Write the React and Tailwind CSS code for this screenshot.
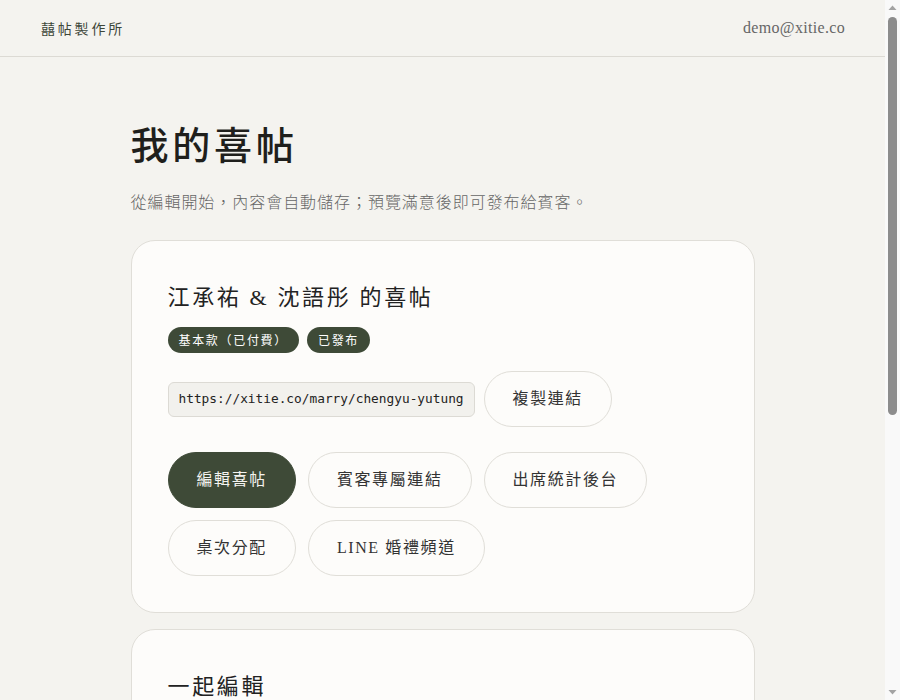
export default function App() {
  const serif = { fontFamily: '"Liberation Serif", "Noto Sans CJK TC", serif' };
  const btn = "h-14 px-7 rounded-full border border-[#e0ded8] bg-[#fdfcfa] text-[16px] tracking-[0.1em] text-[#333]";
  const btnDark = "h-14 px-7 rounded-full border border-[#3e4a37] bg-[#3e4a37] text-[16px] tracking-[0.1em] text-[#f4f3ef]";
  return (
    <div className="h-[700px] flex overflow-hidden bg-[#f4f3ef] text-[#222]" style={serif}>
      <div className="flex-1 min-w-0 overflow-hidden">
        <header className="h-[57px] border-b border-[#dcdad4] flex items-center justify-between pl-[41px] pr-[40px]">
          <div className="text-[14px] tracking-[0.2em] text-[#3d4639]" style={{ fontFamily: '"Noto Sans CJK TC", sans-serif' }}>囍帖製作所</div>
          <div className="text-[16px] tracking-[0.02em] text-[#666]">demo@xitie.co</div>
        </header>
        <main className="max-w-2xl mx-auto px-6 pt-[67px] pb-16">
          <h1 className="text-[38px] leading-[44px] font-medium tracking-[0.1em] text-[#1f1f1c]">我的喜帖</h1>
          <p className="mt-[23px] text-[16px] leading-[24px] tracking-[0.06em] text-[#666] font-light">從編輯開始，內容會自動儲存；預覽滿意後即可發布給賓客。</p>

          <section className="mt-[25px] bg-[#fdfcfa] border border-[#e0ded8] rounded-[24px] pt-10 px-9 pb-9">
            <h2 className="text-[22px] leading-[33px] tracking-[0.12em] text-[#222] font-normal">江承祐 &amp; 沈語彤 的喜帖</h2>
            <div className="mt-[13px] flex gap-2" style={{ fontFamily: '"Noto Sans CJK TC", sans-serif' }}>
              <span className="h-[26px] px-[11px] rounded-full bg-[#3e4a37] text-white text-[12px] tracking-[0.14em] flex items-center">基本款（已付費）</span>
              <span className="h-[26px] px-[11px] rounded-full bg-[#3e4a37] text-white text-[12px] tracking-[0.14em] flex items-center">已發布</span>
            </div>
            <div className="mt-[18px] flex items-center gap-[9px]">
              <div className="h-[35px] px-[10px] flex items-center bg-[#f2f1ed] border border-[#dcdad4] rounded-[6px] text-[12.8px] text-[#222]" style={{ fontFamily: '"DejaVu Sans Mono", monospace' }}>https://xitie.co/marry/chengyu-yutung</div>
              <button className={btn}>複製連結</button>
            </div>
            <div className="mt-[25px] flex flex-wrap gap-3 w-[500px]">
              <button className={btnDark}>編輯喜帖</button>
              <button className={btn}>賓客專屬連結</button>
              <button className={btn}>出席統計後台</button>
              <button className={btn}>桌次分配</button>
              <button className={btn}>LINE 婚禮頻道</button>
            </div>
          </section>

          <section className="mt-4 bg-[#fdfcfa] border border-[#e0ded8] rounded-[24px] pt-10 px-9 pb-9">
            <h2 className="text-[22px] leading-[33px] tracking-[0.12em] text-[#222] font-normal">一起編輯</h2>
            <p className="mt-3 text-[15px] leading-[26px] tracking-[0.05em] text-[#666]">邀請另一半或家人共同編輯這份喜帖，所有人都能即時看到最新內容。</p>
            <div className="mt-6 flex items-center gap-3">
              <div className="flex-1 h-[44px] px-4 flex items-center bg-[#f2f1ed] border border-[#dcdad4] rounded-[8px] text-[15px] text-[#999]">輸入對方的 Email</div>
              <button className={btnDark}>送出邀請</button>
            </div>
            <div className="mt-8 flex flex-col">
              <div className="flex items-center justify-between py-4 border-b border-[#ebe9e3]">
                <div>
                  <div className="text-[16px] text-[#222]">demo@xitie.co</div>
                  <div className="text-[13px] text-[#888] mt-1">擁有者</div>
                </div>
                <span className="text-[13px] text-[#888]">你</span>
              </div>
              <div className="flex items-center justify-between py-4 border-b border-[#ebe9e3]">
                <div>
                  <div className="text-[16px] text-[#222]">yutung@example.com</div>
                  <div className="text-[13px] text-[#888] mt-1">共同編輯者</div>
                </div>
                <button className="h-10 px-5 rounded-full border border-[#e0ded8] text-[14px] text-[#333]">移除</button>
              </div>
            </div>
          </section>
        </main>
      </div>
      <div className="w-[15px] shrink-0 bg-[#f9f9f9] flex flex-col items-center">
        <svg width="15" height="15" viewBox="0 0 15 15" className="shrink-0">
          <path d="M3.5 10 L7.5 5.5 L11.5 10 Z" fill="#a3a3a3" />
        </svg>
        <div className="w-[9px] h-[398px] mt-[2px] rounded-full bg-[#8c8c8c]" />
        <div className="flex-1" />
        <svg width="15" height="15" viewBox="0 0 15 15" className="shrink-0">
          <path d="M3.5 5 L7.5 9.5 L11.5 5 Z" fill="#a3a3a3" />
        </svg>
      </div>
    </div>
  );
}
